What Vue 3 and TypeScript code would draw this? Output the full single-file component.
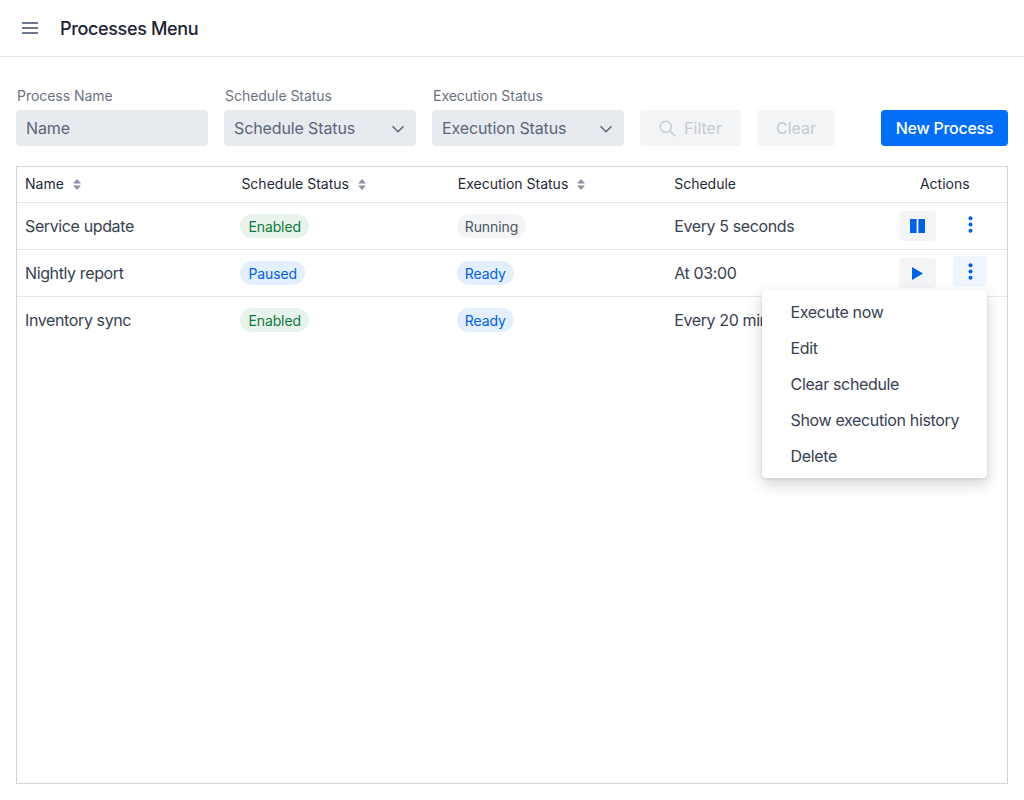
<script setup lang="ts">
import { ref } from 'vue';

interface ProcessRow {
  id: number;
  name: string;
  schedule: string;
  scheduleLabel: string;
  scheduleTone: string;
  execLabel: string;
  execTone: string;
  running: boolean;
}

const rows: ProcessRow[] = [
  { id: 1, name: 'Service update', schedule: 'Every 5 seconds', scheduleLabel: 'Enabled', scheduleTone: 'green', execLabel: 'Running', execTone: 'gray', running: true },
  { id: 2, name: 'Nightly report', schedule: 'At 03:00', scheduleLabel: 'Paused', scheduleTone: 'blue', execLabel: 'Ready', execTone: 'blue', running: false },
  { id: 3, name: 'Inventory sync', schedule: 'Every 20 minutes', scheduleLabel: 'Enabled', scheduleTone: 'green', execLabel: 'Ready', execTone: 'blue', running: false },
];

const menuItems = ['Execute now', 'Edit', 'Clear schedule', 'Show execution history', 'Delete'];

const openMenu = ref<number | null>(2);

function toggleMenu(id: number) {
  openMenu.value = openMenu.value === id ? null : id;
}
</script>

<template>
  <div class="page">
    <header class="topbar">
      <button class="menu-btn" type="button" aria-label="Menu">
        <svg width="16" height="12" viewBox="0 0 16 12">
          <path d="M0 1h16M0 6h16M0 11h16" stroke="#6b7688" stroke-width="2" fill="none" />
        </svg>
      </button>
      <h1>Processes Menu</h1>
    </header>

    <main class="content">
      <div class="filters">
        <div class="field">
          <label for="pname">Process Name</label>
          <input id="pname" type="text" placeholder="Name" />
        </div>
        <div class="field">
          <label for="sstatus">Schedule Status</label>
          <div class="select-wrap">
            <select id="sstatus"><option>Schedule Status</option></select>
            <svg class="chevron" width="14" height="8" viewBox="0 0 14 8">
              <path d="M1.5 1.2 7 6.7l5.5-5.5" stroke="#5b6678" stroke-width="1.5" fill="none" />
            </svg>
          </div>
        </div>
        <div class="field">
          <label for="estatus">Execution Status</label>
          <div class="select-wrap">
            <select id="estatus"><option>Execution Status</option></select>
            <svg class="chevron" width="14" height="8" viewBox="0 0 14 8">
              <path d="M1.5 1.2 7 6.7l5.5-5.5" stroke="#5b6678" stroke-width="1.5" fill="none" />
            </svg>
          </div>
        </div>
        <button class="btn btn-disabled btn-filter" type="button" disabled>
          <svg width="17" height="17" viewBox="0 0 17 17">
            <circle cx="6.8" cy="6.8" r="5.6" stroke="#c5cad3" stroke-width="1.4" fill="none" />
            <path d="m10.9 10.9 5.3 5.3" stroke="#c5cad3" stroke-width="1.5" />
          </svg>
          Filter
        </button>
        <button class="btn btn-disabled btn-clear" type="button" disabled>Clear</button>
        <button class="btn btn-primary" type="button">New Process</button>
      </div>

      <div class="table">
        <div class="row head">
          <div class="cell">
            Name
            <svg class="sort" width="8" height="11" viewBox="0 0 8 11"><path d="M4 0l4 4.4H0zM4 11l4-4.4H0z" /></svg>
          </div>
          <div class="cell">
            Schedule Status
            <svg class="sort" width="8" height="11" viewBox="0 0 8 11"><path d="M4 0l4 4.4H0zM4 11l4-4.4H0z" /></svg>
          </div>
          <div class="cell">
            Execution Status
            <svg class="sort" width="8" height="11" viewBox="0 0 8 11"><path d="M4 0l4 4.4H0zM4 11l4-4.4H0z" /></svg>
          </div>
          <div class="cell">Schedule</div>
          <div class="cell actions-head">Actions</div>
        </div>
        <div v-for="r in rows" :key="r.id" class="row body">
          <div class="cell">{{ r.name }}</div>
          <div class="cell"><span class="badge" :class="r.scheduleTone">{{ r.scheduleLabel }}</span></div>
          <div class="cell"><span class="badge" :class="r.execTone">{{ r.execLabel }}</span></div>
          <div class="cell">{{ r.schedule }}</div>
          <div class="cell actions">
            <button class="act-btn" type="button" :aria-label="r.running ? 'Pause' : 'Run'">
              <svg v-if="r.running" width="15" height="14" viewBox="0 0 15 14">
                <path d="M0 0h6.6v14H0zM8.4 0H15v14H8.4z" fill="#0062e0" />
              </svg>
              <svg v-else width="11" height="13" viewBox="0 0 11 13">
                <path d="M0 0l11 6.5L0 13z" fill="#0062e0" />
              </svg>
            </button>
            <div class="kebab-wrap">
              <button
                class="kebab"
                :class="{ open: openMenu === r.id }"
                type="button"
                aria-label="More"
                @click="toggleMenu(r.id)"
              >
                <svg width="5" height="17" viewBox="0 0 5 17">
                  <circle cx="2.5" cy="2.2" r="2" fill="#0062e0" />
                  <circle cx="2.5" cy="8.5" r="2" fill="#0062e0" />
                  <circle cx="2.5" cy="14.8" r="2" fill="#0062e0" />
                </svg>
              </button>
              <ul v-if="openMenu === r.id" class="dropdown">
                <li v-for="item in menuItems" :key="item">{{ item }}</li>
              </ul>
            </div>
          </div>
        </div>
      </div>
    </main>
  </div>
</template>

<style>
html, body {
  margin: 0;
  background: #fff;
}
</style>

<style scoped>
.page {
  height: 800px;
  display: flex;
  flex-direction: column;
  box-sizing: border-box;
  font-family: Inter, "Liberation Sans", sans-serif;
  color: #374151;
  overflow: hidden;
}
.topbar {
  height: 57px;
  box-sizing: border-box;
  border-bottom: 1px solid #e5e7eb;
  display: flex;
  align-items: center;
  padding-left: 22px;
}
.menu-btn {
  border: none;
  background: none;
  padding: 0;
  display: flex;
  margin-right: 22px;
}
.topbar h1 {
  margin: 0;
  font-size: 18px;
  font-weight: 500;
  letter-spacing: -0.35px;
  color: #1a2233;
}
.content {
  flex: 1;
  display: flex;
  flex-direction: column;
  padding: 30px 16px 16px;
  min-height: 0;
}
.filters {
  display: flex;
  align-items: flex-end;
  gap: 16px;
}
.field {
  display: flex;
  flex-direction: column;
  width: 192px;
}
.field label {
  font-size: 14px;
  line-height: 17px;
  letter-spacing: -0.04px;
  color: #6b7280;
  margin: 0 0 6px 1px;
}
.field input,
.field select {
  width: 100%;
  height: 36px;
  box-sizing: border-box;
  border: none;
  border-radius: 4px;
  background: #e7eaee;
  padding: 0 10px;
  font: inherit;
  font-size: 16px;
  letter-spacing: -0.12px;
  color: #5b6678;
  outline: none;
  appearance: none;
}
.field input::placeholder {
  color: #5b6678;
  opacity: 1;
}
.select-wrap {
  position: relative;
}
.chevron {
  position: absolute;
  right: 11px;
  top: 15px;
  pointer-events: none;
}
.btn {
  height: 36px;
  box-sizing: border-box;
  border: none;
  border-radius: 4px;
  font: inherit;
  font-size: 16px;
  display: flex;
  align-items: center;
  justify-content: center;
}
.btn-disabled {
  background: #f3f4f6;
  color: #c5cad3;
}
.btn-filter {
  width: 101px;
  gap: 8px;
}
.btn-clear {
  width: 78px;
}
.btn-primary {
  width: 127px;
  margin-left: 30px;
  background: #006ef5;
  color: #fff;
  font-weight: 500;
  letter-spacing: -0.25px;
}
.table {
  flex: 1;
  margin-top: 20px;
  border: 1px solid #d1d5db;
}
.row {
  display: grid;
  grid-template-columns: repeat(4, 216.4px) 1fr;
  align-items: center;
  box-sizing: border-box;
  border-bottom: 1px solid #e5e7eb;
}
.row.body:last-child {
  border-bottom-color: transparent;
}
.head {
  height: 36px;
  padding-bottom: 2px;
  font-size: 14px;
  color: #1f2937;
}
.body {
  height: 47px;
  font-size: 16px;
  letter-spacing: -0.38px;
  color: #374151;
}
.cell {
  padding: 0 8px;
  white-space: nowrap;
  display: flex;
  align-items: center;
}
.sort {
  margin-left: 9px;
  margin-top: 1px;
  fill: #8a93a6;
}
.actions-head {
  justify-content: center;
}
.badge {
  height: 24px;
  margin-left: -1px;
  padding: 0 8px;
  border-radius: 12px;
  font-size: 14px;
  line-height: 25px;
  letter-spacing: -0.1px;
}
.badge.green {
  background: #e8f3ec;
  color: #0f7a3c;
}
.badge.blue {
  background: #e3effe;
  color: #0062e0;
}
.badge.gray {
  background: #f3f4f6;
  color: #4b5563;
}
.actions {
  gap: 17px;
  padding: 0 0 0 16px;
}
.act-btn {
  width: 37px;
  height: 30px;
  border: none;
  border-radius: 4px;
  background: #f3f4f6;
  padding: 0;
  display: flex;
  align-items: center;
  justify-content: center;
}
.kebab-wrap {
  position: relative;
  margin-top: -4px;
}
.kebab {
  width: 34px;
  height: 30px;
  border: none;
  border-radius: 4px;
  background: transparent;
  padding: 0 0 0 1px;
  display: flex;
  align-items: center;
  justify-content: center;
}
.kebab.open {
  background: #eff5fd;
}
.dropdown {
  position: absolute;
  top: 34px;
  right: 0;
  z-index: 10;
  width: 225px;
  box-sizing: border-box;
  margin: 0;
  padding: 4px 0;
  list-style: none;
  background: #fff;
  border-radius: 4px;
  box-shadow: 0 6px 16px rgba(31, 41, 55, 0.2), 0 1px 3px rgba(31, 41, 55, 0.12);
}
.dropdown li {
  height: 36px;
  line-height: 36px;
  padding-left: 29px;
  font-size: 16px;
  letter-spacing: -0.35px;
  color: #374151;
}
</style>
